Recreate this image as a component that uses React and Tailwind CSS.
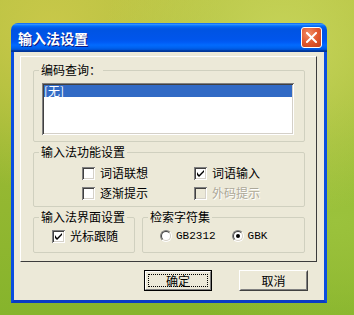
import React from "react";

const sunken =
  "shadow-[inset_1px_1px_0_#808080,inset_-1px_-1px_0_#ffffff,inset_2px_2px_0_#404040,inset_-2px_-2px_0_#d4d0c8]";

function CheckBox({ checked, disabled, label }) {
  return (
    <div className="flex items-center gap-[5px] h-[20px] whitespace-nowrap">
      <div
        className={`shrink-0 w-[13px] h-[13px] flex items-center justify-center ${sunken} ${
          disabled ? "bg-[#ece9d8]" : "bg-white"
        }`}
      >
        {checked && (
          <svg width="7" height="7" viewBox="0 0 7 7">
            <path d="M0 2v3l2 2l5-5v-2l-5 5z" fill="#000" />
          </svg>
        )}
      </div>
      <span
        className={
          disabled
            ? "text-[#aca899] [text-shadow:1px_1px_0_#ffffff]"
            : "text-black"
        }
      >
        {label}
      </span>
    </div>
  );
}

function Radio({ checked, label }) {
  return (
    <div className="flex items-center gap-[4px] h-[20px]">
      <div className="shrink-0 w-[12px] h-[12px] rounded-full border border-t-[#808080] border-l-[#808080] border-r-white border-b-white">
        <div className="w-full h-full rounded-full border border-t-[#404040] border-l-[#404040] border-r-[#d4d0c8] border-b-[#d4d0c8] bg-white flex items-center justify-center">
          {checked && <div className="w-[4px] h-[4px] rounded-full bg-black" />}
        </div>
      </div>
      <span className="font-['Liberation_Mono',monospace] text-[11px]">{label}</span>
    </div>
  );
}

function Group({ title, className, children }) {
  return (
    <fieldset className={`min-w-0 border border-[#d0d0bf] rounded-[2px] ${className}`}>
      <legend className="ml-[5px] px-[2px] h-[14px] leading-[14px] whitespace-nowrap">{title}</legend>
      {children}
    </fieldset>
  );
}

export default function App() {
  return (
    <div className="w-[354px] h-[315px] overflow-hidden pl-[11px] pt-[23px] font-['Noto_Sans_CJK_SC',sans-serif] text-[12px] text-black bg-[radial-gradient(ellipse_at_80%_15%,#c7d45a_0%,transparent_45%),radial-gradient(ellipse_at_15%_10%,#c9c84a_0%,transparent_40%),radial-gradient(ellipse_at_95%_70%,#9bc23c_0%,transparent_40%),linear-gradient(180deg,#b3c03e_0%,#9ab934_45%,#86b42c_100%)]">
      <div className="w-[316px] flex flex-col">
        {/* title bar */}
        <div className="h-[29px] rounded-t-[7px] flex items-center justify-between pl-[7px] pr-[5px] bg-[linear-gradient(180deg,#0058ee_0%,#3593ff_4%,#288eff_6%,#127dff_8%,#036ffc_10%,#0262ee_14%,#0057e5_20%,#0054e3_24%,#0055eb_56%,#005bf5_66%,#026afe_76%,#0062ef_86%,#0052d6_92%,#0040ab_94%,#003092_100%)]">
          <span className="text-white font-bold text-[14px] leading-none [text-shadow:1px_1px_0_#0a1883]">
            输入法设置
          </span>
          <div className="w-[21px] h-[21px] rounded-[3px] border border-white flex items-center justify-center bg-[radial-gradient(circle_at_35%_30%,#f08f68_0%,#e2592f_50%,#c4401c_100%)]">
            <svg width="11" height="11" viewBox="0 0 11 11">
              <path d="M1 1L10 10M10 1L1 10" stroke="#fff" strokeWidth="2" strokeLinecap="square" />
            </svg>
          </div>
        </div>

        {/* client area */}
        <div className="h-[251px] bg-[#ece9d8] border-x-[3px] border-b-[3px] border-x-[#0a4ee0] border-b-[#0a3cc4] pl-[6px] pr-[7px] pt-[4px]">
          <div className="h-[206px] border border-t-white border-l-white border-r-[#3c3c3c] border-b-[#3c3c3c] pl-[12px] pr-[11px] pt-[6px]">
            <Group title="编码查询：">
              <div className="pl-[8px] pr-[10px] pt-[6px] pb-[6px]">
                <div className={`h-[52px] bg-white p-[2px] ${sunken}`}>
                  <div className="h-[12px] leading-[12px] bg-[#316ac5] text-white">[无]</div>
                </div>
              </div>
            </Group>

            <Group title="输入法功能设置" className="mt-[3px]">
              <div className="grid grid-cols-[112px_1fr] pl-[48px] pt-[4px] pb-[3px]">
                <CheckBox label="词语联想" />
                <CheckBox label="词语输入" checked />
                <CheckBox label="逐渐提示" />
                <CheckBox label="外码提示" disabled />
              </div>
            </Group>

            <div className="mt-[3px] flex gap-[7px]">
              <Group title="输入法界面设置" className="w-[102px] shrink-0">
                <div className="pl-[18px] pt-[2px] pb-[6px]">
                  <CheckBox label="光标跟随" checked />
                </div>
              </Group>
              <Group title="检索字符集" className="w-[163px] shrink-0">
                <div className="flex gap-[16px] pl-[17px] pt-[2px] pb-[6px]">
                  <Radio label="GB2312" />
                  <Radio label="GBK" checked />
                </div>
              </Group>
            </div>
          </div>

          {/* buttons */}
          <div className="mt-[8px] flex justify-end gap-[27px] pr-[9px]">
            <button className="w-[68px] h-[21px] border border-black bg-[#ece9d8] p-0">
              <div className="w-full h-full border border-t-white border-l-white border-r-[#808080] border-b-[#808080] p-[2px]">
                <div className="w-full h-full border border-dotted border-black flex items-center justify-center leading-none">
                  确定
                </div>
              </div>
            </button>
            <button className="w-[69px] h-[21px] border border-t-white border-l-white border-r-[#404040] border-b-[#404040] bg-[#ece9d8] p-0">
              <div className="w-full h-full border border-t-[#ece9d8] border-l-[#ece9d8] border-r-[#808080] border-b-[#808080] flex items-center justify-center leading-none">
                取消
              </div>
            </button>
          </div>
        </div>
      </div>
    </div>
  );
}
